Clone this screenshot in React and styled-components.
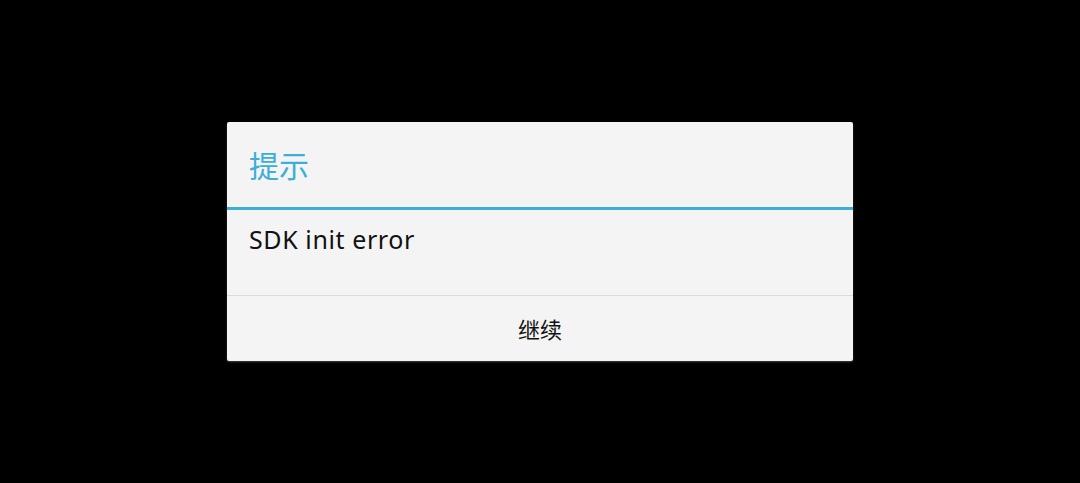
import React from "react";
import styled, { createGlobalStyle } from "styled-components";

const Global = createGlobalStyle`
  html, body { margin: 0; padding: 0; background: #000; }
  #root { height: 100vh; }
`;

const Screen = styled.div`
  height: 100%;
  display: flex;
  align-items: center;
  justify-content: center;
  background: #000;
`;

const Dialog = styled.div`
  width: 626px;
  background: #f4f4f4;
  border-radius: 2px;
  display: flex;
  flex-direction: column;
  box-shadow: 0 1px 2px rgba(255, 255, 255, 0.25);
`;

const Title = styled.div`
  height: 88px;
  box-sizing: border-box;
  border-bottom: 3px solid #3cafd8;
  display: flex;
  align-items: center;
  padding: 0 22px 2px;
  font-family: "Noto Sans CJK SC", "Noto Sans", sans-serif;
  font-size: 30px;
  color: #3cafd8;
`;

const Message = styled.div`
  height: 86px;
  box-sizing: border-box;
  border-bottom: 1px solid #dcdcdc;
  padding: 12px 22px 0;
  font-family: "Noto Sans", "Noto Sans CJK SC", sans-serif;
  font-size: 25px;
  letter-spacing: 0.6px;
  color: #111;
`;

const Button = styled.button`
  height: 65px;
  border: none;
  background: transparent;
  font-family: "Noto Sans CJK SC", "Noto Sans", sans-serif;
  font-size: 22px;
  color: #111;
  padding: 0 0 2px;
  cursor: pointer;
`;

export default function App() {
  return (
    <>
      <Global />
      <Screen>
        <Dialog>
          <Title>提示</Title>
          <Message>SDK init error</Message>
          <Button>继续</Button>
        </Dialog>
      </Screen>
    </>
  );
}
